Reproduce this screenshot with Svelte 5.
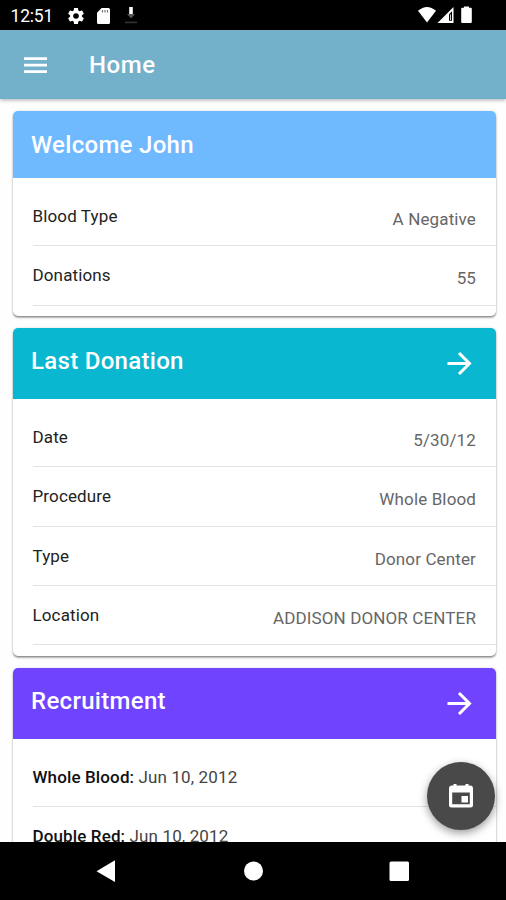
<script>
  const cards = [
    {
      title: 'Welcome John', tone: 'sky', arrow: false,
      rows: [['Blood Type', 'A Negative'], ['Donations', '55']]
    },
    {
      title: 'Last Donation', tone: 'teal', arrow: true,
      rows: [['Date', '5/30/12'], ['Procedure', 'Whole Blood'], ['Type', 'Donor Center'], ['Location', 'ADDISON DONOR CENTER']]
    }
  ];
  const recruitment = [['Whole Blood:', 'Jun 10, 2012'], ['Double Red:', 'Jun 10, 2012']];
</script>

{#snippet arrowIcon()}
  <svg class="arrow" viewBox="0 0 30 30" aria-hidden="true">
    <path d="M3.5 15.5H25M15 5l10.5 10.5L15 26" fill="none" stroke="#fff" stroke-width="3" />
  </svg>
{/snippet}

<div class="screen">
  <div class="status">
    <span class="clock">12:51</span>
    <svg class="gear" viewBox="2 2 20 20" width="16" height="16"><path fill="#fff" d="M19.43 12.98c.04-.32.07-.64.07-.98s-.03-.66-.07-.98l2.11-1.65c.19-.15.24-.42.12-.64l-2-3.46c-.12-.22-.39-.3-.61-.22l-2.49 1c-.52-.4-1.08-.73-1.69-.98l-.38-2.65A.49.49 0 0 0 14 2h-4c-.25 0-.46.18-.49.42l-.38 2.65c-.61.25-1.17.59-1.69.98l-2.49-1c-.23-.09-.49 0-.61.22l-2 3.46c-.13.22-.07.49.12.64l2.11 1.65c-.04.32-.07.65-.07.98s.03.66.07.98l-2.11 1.65c-.19.15-.24.42-.12.64l2 3.46c.12.22.39.3.61.22l2.49-1c.52.4 1.08.73 1.69.98l.38 2.65c.03.24.24.42.49.42h4c.25 0 .46-.18.49-.42l.38-2.65c.61-.25 1.17-.59 1.69-.98l2.49 1c.23.09.49 0 .61-.22l2-3.46c.12-.22.07-.49-.12-.64zM12 15.5a3.5 3.5 0 1 1 0-7 3.5 3.5 0 0 1 0 7z" /></svg>
    <svg class="sd" viewBox="0 0 13 16" width="13" height="16"><path fill="#fff" d="M4.6 0H11.5Q13 0 13 1.5V14.5Q13 16 11.5 16H1.5Q0 16 0 14.5V4.8Z" /><path stroke="#777" stroke-width="1.2" d="M5.5 2v2.5M8 2v2.5M10.5 2v2.5" /></svg>
    <svg class="download" viewBox="0 0 14 17" width="14" height="17"><path fill="#fff" d="M5.2 0h3.6v7H5.2z" /><path fill="#555" d="M3 7h8l-4 4.5z" /><path fill="#333" d="M1 14.6h12v1.6H1z" /></svg>
    <svg class="signals" viewBox="0 0 55 18" width="55" height="18">
      <path fill="#fff" d="M0 4.8Q9 -3 18 4.8L9 16.5Z" />
      <path fill="#fff" d="M19.5 17L35.5 1V17Z" /><path fill="#000" d="M31 8.2L34 5.2V14.8H31Z" /><path fill="#fff" d="M32.2 8.7l.8-.8v6h-.8z" />
      <path fill="#fff" d="M46 1.8V.5h5v1.3h1.8q1 0 1 1V16q0 1-1 1h-8.600q-1 0-1-1V2.800q0-1 1-1Z" />
    </svg>
  </div>

  <header class="appbar">
    <svg class="menu" viewBox="0 0 23 16" width="23" height="16"><path fill="#fff" d="M0 .2h23v2.700H0zM0 6.800h23v2.700H0zM0 13.200h23v2.700H0z" /></svg>
    <h1>Home</h1>
  </header>

  <main>
    {#each cards as card}
      <section class="card">
        <div class="head {card.tone}"><h2>{card.title}</h2>{#if card.arrow}{@render arrowIcon()}{/if}</div>
        <div class="rows">
          {#each card.rows as row}
            <div class="row"><span class="label">{row[0]}</span><span class="value">{row[1]}</span></div>
          {/each}
        </div>
      </section>
    {/each}
    <section class="card">
      <div class="head violet"><h2>Recruitment</h2>{@render arrowIcon()}</div>
      <div class="rows">
        {#each recruitment as item}
          <div class="row"><span class="label date"><b>{item[0]}</b> {item[1]}</span></div>
        {/each}
      </div>
    </section>
  </main>

  <button class="fab" aria-label="Schedule">
    <svg viewBox="0 0 24 25" width="24" height="25"><path fill="#fff" fill-rule="evenodd" d="M3 2.500H4.500V1h3V2.500h9V1h3V2.500H21q3 0 3 3V22q0 2.500-2.500 2.500h-19Q0 24.500 0 22V5.500q0-3 3-3ZM3.200 9.500V21.300H20.800V9.500Z" /><rect x="12.500" y="13" width="6.500" height="6.500" fill="#fff" /></svg>
  </button>

  <nav>
    <svg viewBox="0 0 506 58" width="506" height="58"><path fill="#fff" d="M96.500 29.300L115 18.300V40Z" /><circle cx="253.500" cy="29" r="9.500" fill="#fff" /><rect x="389.500" y="19.500" width="19.500" height="19.500" rx="1.500" fill="#fff" /></svg>
  </nav>
</div>

<style>
  :global(body) { margin: 0; overflow: hidden; }
  .screen { position: relative; width: 506px; height: 900px; display: flex; flex-direction: column; overflow: hidden; background: #fefefe; font-family: Roboto, sans-serif; box-sizing: border-box; }
  .status { flex: none; height: 29.500px; background: #000; display: flex; align-items: flex-start; color: #fff; }
  .clock { width: 57.500px; padding-left: 10.500px; font-size: 17.500px; letter-spacing: -.2px; line-height: 20px; padding-top: 6px; font-weight: 400; box-sizing: border-box; }
  .gear { margin: 7.500px 0 0 10.500px; }
  .sd { margin: 7.500px 0 0 13px; }
  .download { margin: 7px 0 0 13.500px; }
  .signals { margin: 6px 0 0 auto; padding-right: 33px; }
  .appbar { position: relative; z-index: 1; flex: none; height: 69px; background: #73b0ca; display: flex; align-items: center; box-shadow: 0 1px 4px #0005; color: #fff; }
  .menu { margin: 1px 0 0 23.500px; }
  h1 { margin: 2px 0 0 42.500px; font-size: 24px; letter-spacing: .55px; font-weight: 500; line-height: 30px; }
  main { flex: 1; min-height: 0; overflow: hidden; padding: 12.500px 10.500px 0 12.500px; display: flex; flex-direction: column; gap: 12px; }
  .card { flex: none; border-radius: 5px; background: #fff; box-shadow: 0 2px 2px #0004, 0 0 3px #0002, 0 1px 1px #0003; }
  .head { height: 71px; display: flex; justify-content: space-between; padding: 18px 21.500px 0 18.500px; box-sizing: border-box; border-radius: 5px 5px 0 0; color: #fff; }
  .sky { height: 67px; padding-top: 19px; background: #6fbaff; }
  .teal { background: #0ab7d0; }
  .violet { background: #7044ff; }
  h2 { margin: 0; font-size: 24px; letter-spacing: .3px; line-height: 30px; font-weight: 500; }
  .arrow { width: 30px; height: 30px; margin-top: 2px; }
  .rows { padding: 9px 0 10.500px 20px; }
  .row { height: 59.300px; display: flex; justify-content: space-between; padding-right: 19.500px; box-sizing: border-box; border-bottom: 1.500px solid #e2e2e2; font-size: 17px; letter-spacing: .13px; line-height: 20px; }
  .label { padding-top: 19px; color: #222; }
  .value { padding-top: 22px; color: #666; }
  .date { color: #444; }
  b { font-weight: 500; color: #111; }
  .fab { position: absolute; left: 427px; top: 761.500px; width: 68px; height: 68px; padding: 0; border: 0; border-radius: 50%; background: #494949; display: flex; align-items: center; justify-content: center; box-shadow: 0 3px 8px #0006; }
  nav { flex: none; height: 58.500px; background: #000; }
  nav svg { display: block; }
</style>
